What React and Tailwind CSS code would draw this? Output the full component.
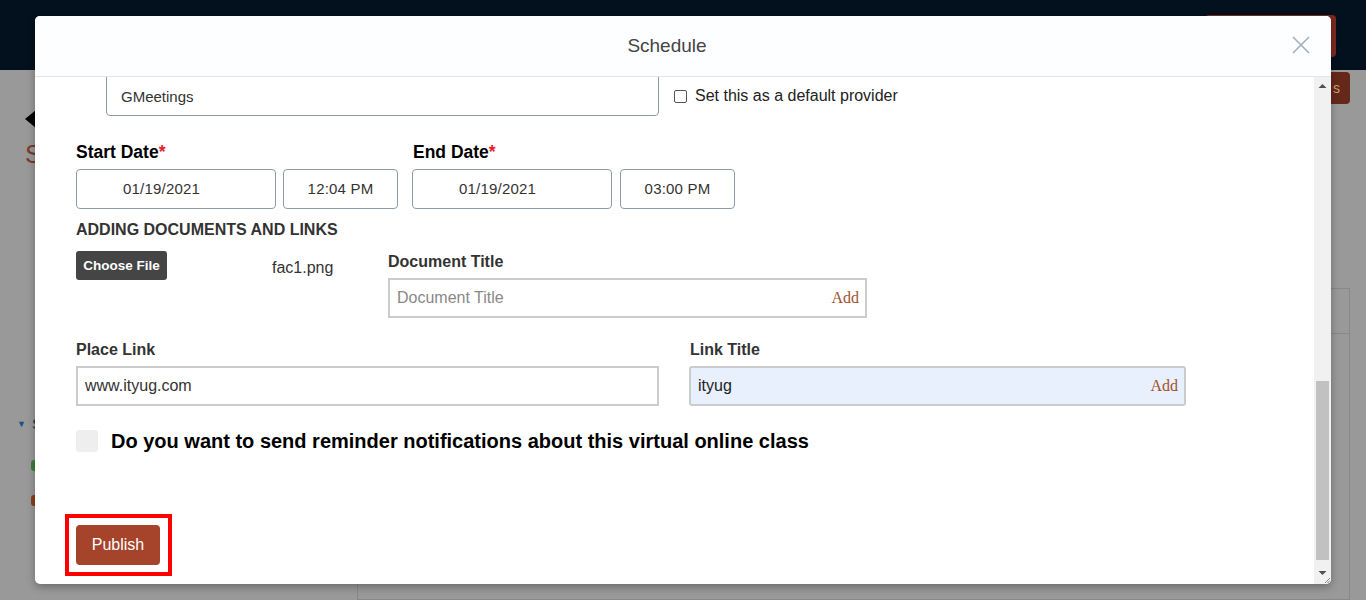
import React from 'react';

const FONT = { fontFamily: '"Liberation Sans", Arial, sans-serif' };

function DateBox({ value, width, centered }) {
  return (
    <div
      className={`flex h-[40px] ${width} items-center rounded-[4px] border border-[#8d9cab] pt-[1px] text-[15px] tracking-[0.2px] text-[#333] ${
        centered ? 'justify-center' : 'pl-[46px]'
      }`}
    >
      {value}
    </div>
  );
}

function Label({ children, required }) {
  return (
    <div className="pt-[1px] text-[17.5px] font-bold leading-[20px] text-black">
      {children}
      {required && <span className="text-[#e3222b]">*</span>}
    </div>
  );
}

function AddInput({ placeholder, value, width, filled }) {
  return (
    <div
      className={`flex h-[40px] ${width} items-center justify-between border-2 border-[#cccccc] pl-[7px] pr-[6px] text-[16px] ${
        filled ? 'rounded-[3px] bg-[#e8f0fe] text-[#222]' : 'bg-white text-[#888]'
      }`}
    >
      <span>{value || placeholder}</span>
      <span className="text-[16px] text-[#a0522d]" style={{ fontFamily: '"Liberation Serif", "Times New Roman", serif' }}>
        Add
      </span>
    </div>
  );
}

function Scrollbar() {
  return (
    <div className="flex w-[17px] shrink-0 flex-col items-center bg-[#f1f1f1]">
      <svg width="9" height="6" viewBox="0 0 9 6" className="mt-[6px]">
        <path d="M0.5 5 L4.5 1 L8.5 5 Z" fill="#505050" />
      </svg>
      <div className="mt-[292px] h-[179px] w-[13px] bg-[#c1c1c1]" />
      <svg width="9" height="6" viewBox="0 0 9 6" className="mt-[10px]">
        <path d="M0.5 1 L4.5 5 L8.5 1 Z" fill="#505050" />
      </svg>
      <svg width="6" height="6" viewBox="0 0 6 6" className="ml-[9px] mt-[1px]">
        <path d="M1 6 L6 1 M3.5 6 L6 3.5" stroke="#8a8a8a" strokeWidth="1" />
      </svg>
    </div>
  );
}

function ScheduleModal() {
  return (
    <div className="absolute left-[35px] top-[16px] flex h-[568px] w-[1296px] flex-col overflow-hidden rounded-[5px] bg-white shadow-[0_3px_9px_rgba(0,0,0,0.3)]">
      <div className="relative flex h-[61px] shrink-0 items-center justify-center border-b border-[#e5e5e5] bg-[#fdfeff] pr-[32px]">
        <div className="text-[19px] text-[#444]">Schedule</div>
        <svg width="18" height="18" viewBox="0 0 18 18" className="absolute right-[21px] top-[20px]">
          <path d="M1 1 L17 17 M17 1 L1 17" stroke="#9eb0bd" strokeWidth="1.6" />
        </svg>
      </div>

      <div className="flex min-h-0 flex-1">
        <div className="flex flex-1 flex-col overflow-hidden pl-[41px]">
          <div className="-mt-[4px] flex items-center">
            <div className="ml-[30px] flex h-[43px] w-[553px] items-center rounded-[4px] border border-[#8d9cab] pl-[14px] pt-[5px] text-[15px] text-[#333]">
              GMeetings
            </div>
            <label className="ml-[15px] flex items-center gap-[8px] pt-[3px] text-[16px] text-[#222]">
              <span className="h-[13px] w-[13px] rounded-[2px] border border-[#555]" />
              Set this as a default provider
            </label>
          </div>

          <div className="mt-[25px] flex">
            <div className="w-[336px]">
              <Label required>Start Date</Label>
              <div className="mt-[7px] flex gap-[7px]">
                <DateBox value="01/19/2021" width="w-[200px]" />
                <DateBox value="12:04 PM" width="w-[115px]" centered />
              </div>
            </div>
            <div>
              <div className="pl-[1px]">
                <Label required>End Date</Label>
              </div>
              <div className="mt-[7px] flex gap-[8px]">
                <DateBox value="01/19/2021" width="w-[200px]" />
                <DateBox value="03:00 PM" width="w-[115px]" centered />
              </div>
            </div>
          </div>

          <div className="mt-[11px] pt-[1px] text-[16px] font-bold leading-[18px] text-[#333]">ADDING DOCUMENTS AND LINKS</div>

          <div className="mt-[12px] flex">
            <div className="flex w-[312px] items-start">
              <button className="h-[29px] w-[91px] rounded-[3px] bg-[#454545] pt-[1px] text-[13.5px] font-bold text-white">Choose File</button>
              <span className="ml-[105px] mt-[5px] text-[16px] text-[#333]">fac1.png</span>
            </div>
            <div className="pt-[2px]">
              <div className="text-[16px] font-bold leading-[18px] text-[#333]">Document Title</div>
              <div className="mt-[7px]">
                <AddInput placeholder="Document Title" width="w-[479px]" />
              </div>
            </div>
          </div>

          <div className="mt-[22px] flex gap-[30px]">
            <div>
              <div className="pt-[1px] text-[16px] font-bold leading-[18px] text-[#333]">Place Link</div>
              <div className="mt-[7px] flex h-[40px] w-[583px] items-center border-2 border-[#cccccc] pl-[7px] text-[16px] text-[#333]">
                www.ityug.com
              </div>
            </div>
            <div>
              <div className="pl-[1px] pt-[1px] text-[16px] font-bold leading-[18px] text-[#333]">Link Title</div>
              <div className="mt-[7px]">
                <AddInput value="ityug" width="w-[497px]" filled />
              </div>
            </div>
          </div>

          <div className="mt-[24px] flex items-center gap-[13px]">
            <span className="h-[22px] w-[22px] shrink-0 rounded-[3px] bg-[#eeeeee]" />
            <span className="text-[20px] font-bold leading-[22px] text-black">
              Do you want to send reminder notifications about this virtual online class
            </span>
          </div>

          <div className="-ml-[11px] mt-[62px] self-start border-4 border-[#ff0000] py-[7px] pl-[7px] pr-[8px]">
            <button className="h-[40px] w-[84px] rounded-[4px] bg-[#a5432b] text-[16px] text-white">Publish</button>
          </div>
        </div>
        <Scrollbar />
      </div>
    </div>
  );
}

export default function App() {
  return (
    <div className="relative h-[600px] w-[1366px] overflow-hidden bg-[#999999]" style={FONT}>
      <header className="flex h-[70px] items-start justify-end bg-[#02111d] pr-[30px] pt-[15px]">
        <div className="h-[42px] w-[131px] rounded-[4px] bg-[#7d2920]" />
      </header>

      <div className="flex h-[530px]">
        <aside className="flex w-[357px] shrink-0 flex-col pl-[17px]">
          <svg width="12" height="18" viewBox="0 0 12 18" className="ml-[8px] mt-[40px]">
            <path d="M11 0 L0 9 L11 18 Z" fill="#000" />
          </svg>
          <div className="ml-[8px] mt-[12px] text-[26px] leading-[28px] text-[#7a3a2c]">S</div>
          <div className="mt-[245px] flex items-center gap-[6px] text-[15px] text-[#1d3557]">
            <span className="text-[9px] text-[#1d4f86]">▼</span>
            <span>S</span>
          </div>
          <span className="ml-[14px] mt-[24px] h-[11px] w-[14px] rounded-[3px] bg-[#3f7d3a]" />
          <span className="ml-[14px] mt-[24px] h-[11px] w-[14px] rounded-[3px] bg-[#8c3d1c]" />
        </aside>

        <main className="flex flex-1 flex-col pr-[16px]">
          <div className="mt-[2px] flex justify-end">
            <div className="flex h-[32px] w-[60px] items-center justify-end rounded-[4px] bg-[#66281a] pr-[10px] text-[14px] text-[#c7a46a]">
              s
            </div>
          </div>
          <div className="mt-[184px] flex-1 border border-[#888]">
            <div className="h-[45px] border-b border-[#888]" />
          </div>
        </main>
      </div>

      <ScheduleModal />
    </div>
  );
}
